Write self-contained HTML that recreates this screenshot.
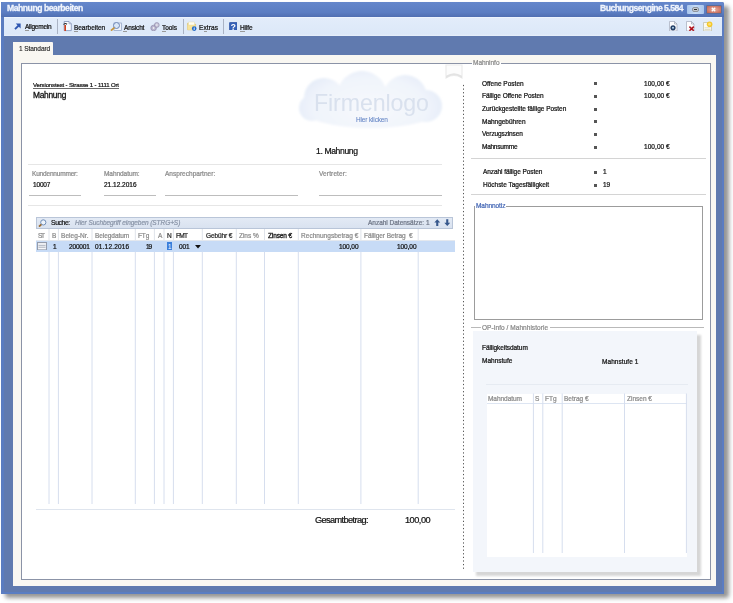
<!DOCTYPE html>
<html><head><meta charset="utf-8">
<style>
*{margin:0;padding:0;box-sizing:border-box}
html,body{width:733px;height:603px;overflow:hidden;background:#fff;font-family:"Liberation Sans",sans-serif;color:#222}
.a{position:absolute}
.t{position:absolute;white-space:nowrap;line-height:1;will-change:transform}
</style></head><body>
<div class="a" style="left:5px;top:6px;width:723.5px;height:591.5px;background:#777;filter:blur(2.3px);opacity:.78;border-radius:3px"></div>
<div class="a" style="left:1px;top:2px;width:723.4px;height:592px;background:#607aaf;border-radius:2px 2px 1px 1px"></div>
<div class="a" style="left:1px;top:2px;width:3px;height:592px;background:#5a7cc0"></div>
<div class="a" style="left:721.7px;top:17px;width:2.7px;height:577px;background:#5a7cc2"></div>
<div class="a" style="left:1px;top:592px;width:723.4px;height:2px;background:#5a7dc2"></div>
<div class="a" style="left:1px;top:2px;width:723.4px;height:15px;background:linear-gradient(#6587cb,#5b7dc2 70%,#506fb2);border-radius:2px 2px 0 0"></div>
<div class="t" style="left:7.2px;top:4px;font-size:8.6px;color:#f0f4fc;-webkit-text-stroke:0.3px #f0f4fc;font-weight:bold;letter-spacing:-0.453px;">Mahnung bearbeiten</div>
<div class="t" style="right:50.24px;top:4px;font-size:8.6px;color:#f0f4fc;-webkit-text-stroke:0.3px #f0f4fc;font-weight:bold;letter-spacing:-0.535px;">Buchungsengine 5.584</div>
<div class="a" style="left:687px;top:5px;width:17.3px;height:9px;background:linear-gradient(90deg,#a9c6ec,#c5dbf7 50%,#a9c6ec);border-radius:1px"></div>
<div class="a" style="left:692px;top:6.6px;width:7.2px;height:5.7px;background:#c3c8cf;border:1px solid #8f959d;border-radius:2px"></div>
<div class="a" style="left:694px;top:8.9px;width:3.2px;height:1.3px;background:#2e2e2e"></div>
<div class="a" style="left:705.5px;top:5px;width:16px;height:9px;background:radial-gradient(ellipse at center,#eab2a4 0,#d27f6e 60%,#b8604f 100%);border:1px solid #5b6d9a;border-radius:1px"></div>
<svg class="a" style="left:711px;top:7px" width="5" height="5"><path d="M.8 .8 L4.2 4.2 M4.2 .8 L.8 4.2" stroke="#fff" stroke-width="1.3"/></svg>
<div class="a" style="left:4px;top:17px;width:718px;height:18.5px;background:linear-gradient(#f3f8ff 0,#e2ecfa 8%,#dce8f8 90%,#e8f0fb 100%)"></div>
<div class="a" style="left:57.3px;top:19px;width:1px;height:15px;background:#aab3c4"></div>
<div class="a" style="left:182.5px;top:19px;width:1px;height:15px;background:#aab3c4"></div>
<div class="a" style="left:223px;top:19px;width:1px;height:15px;background:#aab3c4"></div>
<svg class="a" style="left:14px;top:23px" width="7" height="7" viewBox="0 0 7 7"><path d="M1 6.2 L5.2 2" stroke="#2f56b0" stroke-width="1.9"/><path d="M1.8 .6 H6.6 V5.4 Z" fill="#2f56b0"/></svg>
<div class="t" style="left:25.2px;top:24px;font-size:6.5px;color:#111;-webkit-text-stroke:0.22px #111;letter-spacing:-0.243px;">Allgemein</div>
<div class="a" style="left:25.2px;top:30px;width:4px;height:0.7px;background:#9a9a9a"></div>
<svg class="a" style="left:62px;top:21px" width="10" height="10.5" viewBox="0 0 10 10.5"><path d="M2.2 .5 H7 L9.3 2.8 V9.6 H2.2 Z" fill="#f8faff" stroke="#7d8fb5" stroke-width=".8"/><path d="M7 .5 V2.8 H9.3" fill="none" stroke="#7d8fb5" stroke-width=".6"/><path d="M3.2 4 V10" stroke="#d4401c" stroke-width="1.6"/><path d="M1.6 3.6 Q3 1.6 5 3.2" stroke="#2a2a2a" stroke-width="1.1" fill="none"/></svg>
<div class="t" style="left:74.2px;top:25px;font-size:6.5px;color:#111;-webkit-text-stroke:0.22px #111;letter-spacing:-0.038px;">Bearbeiten</div>
<div class="a" style="left:74.2px;top:30.5px;width:4px;height:0.7px;background:#9a9a9a"></div>
<svg class="a" style="left:110px;top:20.8px" width="12" height="10" viewBox="0 0 12 10"><rect x="4" y="2" width="7.5" height="7.5" fill="#eef2fa" stroke="#8d9ec0" stroke-width=".7"/><circle cx="6.5" cy="4.5" r="3" fill="#d8e6f7" stroke="#6d85b5" stroke-width="1"/><path d="M4.4 6.6 L1 9.6" stroke="#c8963a" stroke-width="1.8"/></svg>
<div class="t" style="left:123.8px;top:25px;font-size:6.5px;color:#111;-webkit-text-stroke:0.22px #111;letter-spacing:-0.153px;">Ansicht</div>
<div class="a" style="left:123px;top:30.5px;width:4px;height:0.7px;background:#9a9a9a"></div>
<svg class="a" style="left:150px;top:21.5px" width="10" height="9" viewBox="0 0 10 9"><circle cx="3.6" cy="6" r="2.8" fill="#b8b4cf" stroke="#8f8aa8" stroke-width=".7"/><circle cx="6.8" cy="3" r="2.4" fill="#c9c6dc" stroke="#8f8aa8" stroke-width=".7"/><circle cx="3.6" cy="6" r=".9" fill="#eee"/><circle cx="6.8" cy="3" r=".8" fill="#eee"/></svg>
<div class="t" style="left:162.3px;top:25px;font-size:6.5px;color:#111;-webkit-text-stroke:0.22px #111;letter-spacing:-0.044px;">Tools</div>
<div class="a" style="left:162.3px;top:30.5px;width:4px;height:0.7px;background:#9a9a9a"></div>
<svg class="a" style="left:187px;top:21px" width="10" height="10" viewBox="0 0 10 10"><path d="M.6 2.2 H3.8 L4.8 3.2 H8.6 V8.8 H.6 Z" fill="#f3dc86" stroke="#d9b85a" stroke-width=".6"/><path d="M1.5 1 H7.5 V4 H1.5Z" fill="#fffdf0" stroke="#e0d4a0" stroke-width=".4"/><path d="M.6 4.2 H8.6 V8.8 H.6 Z" fill="#f7e39a"/><circle cx="7.2" cy="7.6" r="2.3" fill="#1d68cc"/><path d="M7.2 7 V8.9" stroke="#fff" stroke-width=".9"/><circle cx="7.2" cy="6.2" r=".45" fill="#fff"/></svg>
<div class="t" style="left:199px;top:25px;font-size:6.5px;color:#111;-webkit-text-stroke:0.22px #111;letter-spacing:0.116px;">Extras</div>
<div class="a" style="left:203.5px;top:30.5px;width:3.5px;height:0.7px;background:#9a9a9a"></div>
<svg class="a" style="left:228.9px;top:21.9px" width="8.6" height="8.6" viewBox="0 0 8.6 8.6"><rect x=".3" y=".3" width="8" height="8" rx="1.2" fill="#3460b8" stroke="#2a4d9c" stroke-width=".6"/><text x="4.3" y="7.5" font-size="8.4" font-weight="bold" text-anchor="middle" fill="#fff" font-family="Liberation Sans">?</text></svg>
<div class="t" style="left:240.3px;top:25px;font-size:6.5px;color:#111;-webkit-text-stroke:0.22px #111;letter-spacing:-0.126px;">Hilfe</div>
<div class="a" style="left:240.3px;top:30.5px;width:4.5px;height:0.7px;background:#9a9a9a"></div>
<svg class="a" style="left:668.8px;top:20.6px" width="9" height="10.5" viewBox="0 0 9 10.5"><path d="M.5 .5 H5.5 L8 3 V10 H.5 Z" fill="#fcfcfe" stroke="#a3abbb" stroke-width=".7"/><path d="M5.5 .5 V3 H8" fill="none" stroke="#8a93a5" stroke-width=".6"/><circle cx="4" cy="6.8" r="2.6" fill="#243f66"/><circle cx="4" cy="6.8" r="1" fill="#b8d8f0"/></svg>
<svg class="a" style="left:686px;top:20.6px" width="9" height="10.5" viewBox="0 0 9 10.5"><path d="M.5 .5 H5.5 L8 3 V10 H.5 Z" fill="#fcfcfe" stroke="#a3abbb" stroke-width=".7"/><path d="M5.5 .5 V3 H8" fill="none" stroke="#8a93a5" stroke-width=".6"/><path d="M3.4 5.6 L7.8 9.8 M7.8 5.6 L3.4 9.8" stroke="#b0141e" stroke-width="1.5"/></svg>
<svg class="a" style="left:702.6px;top:20.5px" width="10" height="10.5" viewBox="0 0 10 10.5"><path d="M.5 1.5 H6 L8.5 4 V10 H.5 Z" fill="#fbfaf2" stroke="#bdbba5" stroke-width=".7"/><circle cx="6.6" cy="3.2" r="2.8" fill="#f5c82a"/><circle cx="6.6" cy="3.2" r="1.4" fill="#fbe07a"/><path d="M1.6 6.8 H7.5 M1.6 8.6 H7.5" stroke="#c8c4a8" stroke-width=".6"/></svg>
<div class="a" style="left:13px;top:42px;width:40.3px;height:13px;background:#f9f7f2;border-radius:0 1px 0 0"></div>
<div class="t" style="left:18.5px;top:46px;font-size:6.6px;color:#222;-webkit-text-stroke:0.12px #222;letter-spacing:-0.121px;">1 Standard</div>
<div class="a" style="left:13px;top:54.5px;width:703px;height:531px;background:#f9f7f2"></div>
<div class="a" style="left:21px;top:63px;width:690px;height:517px;background:#fff;border:1px solid #8b93a7"></div>
<div class="t" style="left:33.3px;top:82px;font-size:6.0px;color:#111;-webkit-text-stroke:0.22px #111;letter-spacing:-0.138px;">Versionstest - Strasse 1 - 1111 Ort</div>
<div class="a" style="left:33.3px;top:88px;width:86px;height:0.8px;background:#6a6a6a"></div>
<div class="t" style="left:33.3px;top:91px;font-size:8.4px;color:#111;-webkit-text-stroke:0.3px #111;letter-spacing:-0.271px;">Mahnung</div>
<svg class="a" style="left:290px;top:60px" width="160" height="80" viewBox="0 0 160 80"><defs><radialGradient id="cg" gradientUnits="userSpaceOnUse" cx="80" cy="48" r="75" gradientTransform="translate(80 48) scale(1 .55) translate(-80 -48)"><stop offset="0" stop-color="#f7f9fd"/><stop offset="0.75" stop-color="#f0f4fb"/><stop offset="1" stop-color="#e6edf8"/></radialGradient><filter id="cb" x="-10%" y="-10%" width="120%" height="120%"><feGaussianBlur stdDeviation="0.9"/></filter></defs><g filter="url(#cb)" fill="url(#cg)"><ellipse cx="81" cy="48" rx="70" ry="20"/><circle cx="34" cy="38" r="20"/><circle cx="72" cy="36" r="25"/><circle cx="115" cy="37" r="22"/><circle cx="136" cy="46" r="16"/><circle cx="22" cy="48" r="13"/></g></svg>
<div class="t" style="left:313.6px;top:92px;font-size:23.2px;color:#d9e1ee;letter-spacing:-0.116px;">Firmenlogo</div>
<div class="t" style="left:355.7px;top:117px;font-size:6.5px;color:#5f80c2;-webkit-text-stroke:0.05px #5f80c2;letter-spacing:-0.154px;">Hier klicken</div>
<div class="t" style="left:316px;top:147px;font-size:8.6px;color:#111;-webkit-text-stroke:0.22px #111;letter-spacing:-0.380px;">1. Mahnung</div>
<svg class="a" style="left:445px;top:64px" width="18" height="15" viewBox="0 0 18 15"><path d="M1 1 H17 V14 Q9 9 1 14 Z" fill="#fcfcfc" stroke="#ececec" stroke-width="1.2"/><path d="M1 14.2 Q9 8.5 17 14.2 V11.8 Q9 6.5 1 11.8 Z" fill="#e3e3e3"/></svg>
<div class="a" style="left:27.5px;top:164px;width:414.5px;height:1px;background:#e6e6e6"></div>
<div class="a" style="left:27.5px;top:205px;width:414.5px;height:1px;background:#e6e6e6"></div>
<div class="t" style="left:31.9px;top:171px;font-size:6.5px;color:#8a8a8a;-webkit-text-stroke:0.22px #8a8a8a;letter-spacing:-0.180px;">Kundennummer:</div>
<div class="t" style="left:32.5px;top:182px;font-size:6.5px;color:#111;-webkit-text-stroke:0.22px #111;letter-spacing:-0.169px;">10007</div>
<div class="a" style="left:29.4px;top:195px;width:51.4px;height:1px;background:#bdbdbd"></div>
<div class="t" style="left:104.2px;top:171px;font-size:6.5px;color:#8a8a8a;-webkit-text-stroke:0.22px #8a8a8a;letter-spacing:-0.059px;">Mahndatum:</div>
<div class="t" style="left:104.2px;top:182px;font-size:6.5px;color:#111;-webkit-text-stroke:0.22px #111;letter-spacing:0.008px;">21.12.2016</div>
<div class="a" style="left:104px;top:195px;width:51.8px;height:1px;background:#bdbdbd"></div>
<div class="t" style="left:164.9px;top:171px;font-size:6.5px;color:#8a8a8a;-webkit-text-stroke:0.22px #8a8a8a;letter-spacing:0.023px;">Ansprechpartner:</div>
<div class="a" style="left:164.8px;top:195px;width:133.6px;height:1px;background:#bdbdbd"></div>
<div class="t" style="left:318.8px;top:171px;font-size:6.5px;color:#8a8a8a;-webkit-text-stroke:0.22px #8a8a8a;letter-spacing:0.130px;">Vertreter:</div>
<div class="a" style="left:318.8px;top:195px;width:123px;height:1px;background:#bdbdbd"></div>
<svg class="a" style="left:0;top:0" width="733" height="603"><rect x="463" y="84.90" width="1" height="1.25" fill="#555"/><rect x="463" y="88.50" width="1" height="1.25" fill="#555"/><rect x="463" y="92.10" width="1" height="1.25" fill="#555"/><rect x="463" y="95.71" width="1" height="1.25" fill="#555"/><rect x="463" y="99.31" width="1" height="1.25" fill="#555"/><rect x="463" y="102.91" width="1" height="1.25" fill="#555"/><rect x="463" y="106.51" width="1" height="1.25" fill="#555"/><rect x="463" y="110.11" width="1" height="1.25" fill="#555"/><rect x="463" y="113.72" width="1" height="1.25" fill="#555"/><rect x="463" y="117.32" width="1" height="1.25" fill="#555"/><rect x="463" y="120.92" width="1" height="1.25" fill="#555"/><rect x="463" y="124.52" width="1" height="1.25" fill="#555"/><rect x="463" y="128.12" width="1" height="1.25" fill="#555"/><rect x="463" y="131.73" width="1" height="1.25" fill="#555"/><rect x="463" y="135.33" width="1" height="1.25" fill="#555"/><rect x="463" y="138.93" width="1" height="1.25" fill="#555"/><rect x="463" y="142.53" width="1" height="1.25" fill="#555"/><rect x="463" y="146.13" width="1" height="1.25" fill="#555"/><rect x="463" y="149.74" width="1" height="1.25" fill="#555"/><rect x="463" y="153.34" width="1" height="1.25" fill="#555"/><rect x="463" y="156.94" width="1" height="1.25" fill="#555"/><rect x="463" y="160.54" width="1" height="1.25" fill="#555"/><rect x="463" y="164.14" width="1" height="1.25" fill="#555"/><rect x="463" y="167.75" width="1" height="1.25" fill="#555"/><rect x="463" y="171.35" width="1" height="1.25" fill="#555"/><rect x="463" y="174.95" width="1" height="1.25" fill="#555"/><rect x="463" y="178.55" width="1" height="1.25" fill="#555"/><rect x="463" y="182.15" width="1" height="1.25" fill="#555"/><rect x="463" y="185.76" width="1" height="1.25" fill="#555"/><rect x="463" y="189.36" width="1" height="1.25" fill="#555"/><rect x="463" y="192.96" width="1" height="1.25" fill="#555"/><rect x="463" y="196.56" width="1" height="1.25" fill="#555"/><rect x="463" y="200.16" width="1" height="1.25" fill="#555"/><rect x="463" y="203.77" width="1" height="1.25" fill="#555"/><rect x="463" y="207.37" width="1" height="1.25" fill="#555"/><rect x="463" y="210.97" width="1" height="1.25" fill="#555"/><rect x="463" y="214.57" width="1" height="1.25" fill="#555"/><rect x="463" y="218.17" width="1" height="1.25" fill="#555"/><rect x="463" y="221.78" width="1" height="1.25" fill="#555"/><rect x="463" y="225.38" width="1" height="1.25" fill="#555"/><rect x="463" y="228.98" width="1" height="1.25" fill="#555"/><rect x="463" y="232.58" width="1" height="1.25" fill="#555"/><rect x="463" y="236.18" width="1" height="1.25" fill="#555"/><rect x="463" y="239.79" width="1" height="1.25" fill="#555"/><rect x="463" y="243.39" width="1" height="1.25" fill="#555"/><rect x="463" y="246.99" width="1" height="1.25" fill="#555"/><rect x="463" y="250.59" width="1" height="1.25" fill="#555"/><rect x="463" y="254.19" width="1" height="1.25" fill="#555"/><rect x="463" y="257.80" width="1" height="1.25" fill="#555"/><rect x="463" y="261.40" width="1" height="1.25" fill="#555"/><rect x="463" y="265.00" width="1" height="1.25" fill="#555"/><rect x="463" y="268.60" width="1" height="1.25" fill="#555"/><rect x="463" y="272.20" width="1" height="1.25" fill="#555"/><rect x="463" y="275.81" width="1" height="1.25" fill="#555"/><rect x="463" y="279.41" width="1" height="1.25" fill="#555"/><rect x="463" y="283.01" width="1" height="1.25" fill="#555"/><rect x="463" y="286.61" width="1" height="1.25" fill="#555"/><rect x="463" y="290.21" width="1" height="1.25" fill="#555"/><rect x="463" y="293.82" width="1" height="1.25" fill="#555"/><rect x="463" y="297.42" width="1" height="1.25" fill="#555"/><rect x="463" y="301.02" width="1" height="1.25" fill="#555"/><rect x="463" y="304.62" width="1" height="1.25" fill="#555"/><rect x="463" y="308.22" width="1" height="1.25" fill="#555"/><rect x="463" y="311.83" width="1" height="1.25" fill="#555"/><rect x="463" y="315.43" width="1" height="1.25" fill="#555"/><rect x="463" y="319.03" width="1" height="1.25" fill="#555"/><rect x="463" y="322.63" width="1" height="1.25" fill="#555"/><rect x="463" y="326.23" width="1" height="1.25" fill="#555"/><rect x="463" y="329.84" width="1" height="1.25" fill="#555"/><rect x="463" y="333.44" width="1" height="1.25" fill="#555"/><rect x="463" y="337.04" width="1" height="1.25" fill="#555"/><rect x="463" y="340.64" width="1" height="1.25" fill="#555"/><rect x="463" y="344.24" width="1" height="1.25" fill="#555"/><rect x="463" y="347.85" width="1" height="1.25" fill="#555"/><rect x="463" y="351.45" width="1" height="1.25" fill="#555"/><rect x="463" y="355.05" width="1" height="1.25" fill="#555"/><rect x="463" y="358.65" width="1" height="1.25" fill="#555"/><rect x="463" y="362.25" width="1" height="1.25" fill="#555"/><rect x="463" y="365.86" width="1" height="1.25" fill="#555"/><rect x="463" y="369.46" width="1" height="1.25" fill="#555"/><rect x="463" y="373.06" width="1" height="1.25" fill="#555"/><rect x="463" y="376.66" width="1" height="1.25" fill="#555"/><rect x="463" y="380.26" width="1" height="1.25" fill="#555"/><rect x="463" y="383.87" width="1" height="1.25" fill="#555"/><rect x="463" y="387.47" width="1" height="1.25" fill="#555"/><rect x="463" y="391.07" width="1" height="1.25" fill="#555"/><rect x="463" y="394.67" width="1" height="1.25" fill="#555"/><rect x="463" y="398.27" width="1" height="1.25" fill="#555"/><rect x="463" y="401.88" width="1" height="1.25" fill="#555"/><rect x="463" y="405.48" width="1" height="1.25" fill="#555"/><rect x="463" y="409.08" width="1" height="1.25" fill="#555"/><rect x="463" y="412.68" width="1" height="1.25" fill="#555"/><rect x="463" y="416.28" width="1" height="1.25" fill="#555"/><rect x="463" y="419.89" width="1" height="1.25" fill="#555"/><rect x="463" y="423.49" width="1" height="1.25" fill="#555"/><rect x="463" y="427.09" width="1" height="1.25" fill="#555"/><rect x="463" y="430.69" width="1" height="1.25" fill="#555"/><rect x="463" y="434.29" width="1" height="1.25" fill="#555"/><rect x="463" y="437.90" width="1" height="1.25" fill="#555"/><rect x="463" y="441.50" width="1" height="1.25" fill="#555"/><rect x="463" y="445.10" width="1" height="1.25" fill="#555"/><rect x="463" y="448.70" width="1" height="1.25" fill="#555"/><rect x="463" y="452.30" width="1" height="1.25" fill="#555"/><rect x="463" y="455.91" width="1" height="1.25" fill="#555"/><rect x="463" y="459.51" width="1" height="1.25" fill="#555"/><rect x="463" y="463.11" width="1" height="1.25" fill="#555"/><rect x="463" y="466.71" width="1" height="1.25" fill="#555"/><rect x="463" y="470.31" width="1" height="1.25" fill="#555"/><rect x="463" y="473.92" width="1" height="1.25" fill="#555"/><rect x="463" y="477.52" width="1" height="1.25" fill="#555"/><rect x="463" y="481.12" width="1" height="1.25" fill="#555"/><rect x="463" y="484.72" width="1" height="1.25" fill="#555"/><rect x="463" y="488.32" width="1" height="1.25" fill="#555"/><rect x="463" y="491.93" width="1" height="1.25" fill="#555"/><rect x="463" y="495.53" width="1" height="1.25" fill="#555"/><rect x="463" y="499.13" width="1" height="1.25" fill="#555"/><rect x="463" y="502.73" width="1" height="1.25" fill="#555"/><rect x="463" y="506.33" width="1" height="1.25" fill="#555"/><rect x="463" y="509.94" width="1" height="1.25" fill="#555"/><rect x="463" y="513.54" width="1" height="1.25" fill="#555"/><rect x="463" y="517.14" width="1" height="1.25" fill="#555"/><rect x="463" y="520.74" width="1" height="1.25" fill="#555"/><rect x="463" y="524.34" width="1" height="1.25" fill="#555"/><rect x="463" y="527.95" width="1" height="1.25" fill="#555"/><rect x="463" y="531.55" width="1" height="1.25" fill="#555"/><rect x="463" y="535.15" width="1" height="1.25" fill="#555"/><rect x="463" y="538.75" width="1" height="1.25" fill="#555"/><rect x="463" y="542.35" width="1" height="1.25" fill="#555"/><rect x="463" y="545.96" width="1" height="1.25" fill="#555"/><rect x="463" y="549.56" width="1" height="1.25" fill="#555"/><rect x="463" y="553.16" width="1" height="1.25" fill="#555"/><rect x="463" y="556.76" width="1" height="1.25" fill="#555"/><rect x="463" y="560.36" width="1" height="1.25" fill="#555"/><rect x="463" y="563.97" width="1" height="1.25" fill="#555"/><rect x="463" y="567.57" width="1" height="1.25" fill="#555"/></svg>
<div class="a" style="left:36px;top:217px;width:416.5px;height:11.8px;background:linear-gradient(#e3eaf5,#d9e2f0);border:1px solid #b9c5d8"></div>
<svg class="a" style="left:37.8px;top:218.8px" width="9" height="8" viewBox="0 0 9 8"><circle cx="5.3" cy="3.4" r="2.6" fill="#eef4fb" stroke="#6f8db8" stroke-width="1"/><path d="M3.4 5.3 L1 7.6" stroke="#9a6a30" stroke-width="1.8"/></svg>
<div class="t" style="left:50.8px;top:220px;font-size:6.8px;color:#111;-webkit-text-stroke:0.2px #111;letter-spacing:-0.394px;">Suche:</div>
<div class="t" style="left:75px;top:220px;font-size:6.5px;color:#8a95a8;-webkit-text-stroke:0.22px #8a95a8;font-style:italic;letter-spacing:-0.066px;">Hier Suchbegriff eingeben (STRG+S)</div>
<div class="t" style="right:303.42px;top:220px;font-size:6.5px;color:#6d7585;-webkit-text-stroke:0.22px #6d7585;letter-spacing:-0.015px;">Anzahl Datensätze: 1</div>
<svg class="a" style="left:434.3px;top:218.6px" width="6.5" height="7.5" viewBox="0 0 6.5 7.5"><path d="M3.25 .3 L6.2 3.6 H4.3 V7 H2.2 V3.6 H.3 Z" fill="#37588c"/></svg>
<svg class="a" style="left:443.5px;top:218.6px" width="6.5" height="7.5" viewBox="0 0 6.5 7.5"><path d="M3.25 7 L6.2 3.7 H4.3 V.3 H2.2 V3.7 H.3 Z" fill="#37588c"/></svg>
<div class="a" style="left:36px;top:240.3px;width:418.7px;height:11.4px;background:#c7dbf6"></div>
<svg class="a" style="left:0;top:0" width="733" height="603"><line x1="49.0" y1="229" x2="49.0" y2="240.3" stroke="#dfe3ea" stroke-width="1"/><line x1="49.0" y1="251.7" x2="49.0" y2="504" stroke="#d6deee" stroke-width="1"/><line x1="58.4" y1="229" x2="58.4" y2="240.3" stroke="#dfe3ea" stroke-width="1"/><line x1="58.4" y1="251.7" x2="58.4" y2="504" stroke="#d6deee" stroke-width="1"/><line x1="92.0" y1="229" x2="92.0" y2="240.3" stroke="#dfe3ea" stroke-width="1"/><line x1="92.0" y1="251.7" x2="92.0" y2="504" stroke="#d6deee" stroke-width="1"/><line x1="135.3" y1="229" x2="135.3" y2="240.3" stroke="#dfe3ea" stroke-width="1"/><line x1="135.3" y1="251.7" x2="135.3" y2="504" stroke="#d6deee" stroke-width="1"/><line x1="154.4" y1="229" x2="154.4" y2="240.3" stroke="#dfe3ea" stroke-width="1"/><line x1="154.4" y1="251.7" x2="154.4" y2="504" stroke="#d6deee" stroke-width="1"/><line x1="164.0" y1="229" x2="164.0" y2="240.3" stroke="#dfe3ea" stroke-width="1"/><line x1="164.0" y1="251.7" x2="164.0" y2="504" stroke="#d6deee" stroke-width="1"/><line x1="173.4" y1="229" x2="173.4" y2="240.3" stroke="#dfe3ea" stroke-width="1"/><line x1="173.4" y1="251.7" x2="173.4" y2="504" stroke="#d6deee" stroke-width="1"/><line x1="202.3" y1="229" x2="202.3" y2="240.3" stroke="#dfe3ea" stroke-width="1"/><line x1="202.3" y1="251.7" x2="202.3" y2="504" stroke="#d6deee" stroke-width="1"/><line x1="236.3" y1="229" x2="236.3" y2="240.3" stroke="#dfe3ea" stroke-width="1"/><line x1="236.3" y1="251.7" x2="236.3" y2="504" stroke="#d6deee" stroke-width="1"/><line x1="264.5" y1="229" x2="264.5" y2="240.3" stroke="#dfe3ea" stroke-width="1"/><line x1="264.5" y1="251.7" x2="264.5" y2="504" stroke="#d6deee" stroke-width="1"/><line x1="298.3" y1="229" x2="298.3" y2="240.3" stroke="#dfe3ea" stroke-width="1"/><line x1="298.3" y1="251.7" x2="298.3" y2="504" stroke="#d6deee" stroke-width="1"/><line x1="360.9" y1="229" x2="360.9" y2="240.3" stroke="#dfe3ea" stroke-width="1"/><line x1="360.9" y1="251.7" x2="360.9" y2="504" stroke="#d6deee" stroke-width="1"/><line x1="418.2" y1="229" x2="418.2" y2="240.3" stroke="#dfe3ea" stroke-width="1"/><line x1="418.2" y1="251.7" x2="418.2" y2="504" stroke="#d6deee" stroke-width="1"/></svg>
<div class="a" style="left:36px;top:240px;width:418.7px;height:0.6px;background:#e4e8ee"></div>
<div class="t" style="left:37.7px;top:233px;font-size:6.5px;color:#8a8a8a;-webkit-text-stroke:0.22px #8a8a8a;letter-spacing:-1.306px;">ST</div>
<div class="t" style="left:52px;top:233px;font-size:6.5px;color:#8a8a8a;-webkit-text-stroke:0.22px #8a8a8a;">B</div>
<div class="t" style="left:61px;top:233px;font-size:6.5px;color:#8a8a8a;-webkit-text-stroke:0.22px #8a8a8a;letter-spacing:0.051px;">Beleg-Nr.</div>
<div class="t" style="left:94.9px;top:233px;font-size:6.5px;color:#8a8a8a;-webkit-text-stroke:0.22px #8a8a8a;letter-spacing:-0.054px;">Belegdatum</div>
<div class="t" style="left:137.9px;top:233px;font-size:6.5px;color:#8a8a8a;-webkit-text-stroke:0.22px #8a8a8a;letter-spacing:-0.128px;">FTg</div>
<div class="t" style="left:157.6px;top:233px;font-size:6.5px;color:#8a8a8a;-webkit-text-stroke:0.22px #8a8a8a;">A</div>
<div class="t" style="left:166.8px;top:233px;font-size:6.5px;color:#262626;-webkit-text-stroke:0.22px #262626;">N</div>
<div class="t" style="left:176.4px;top:233px;font-size:6.5px;color:#262626;-webkit-text-stroke:0.22px #262626;letter-spacing:-0.678px;">FMT</div>
<div class="t" style="left:205.6px;top:233px;font-size:6.5px;color:#262626;-webkit-text-stroke:0.22px #262626;letter-spacing:-0.100px;">Gebühr €</div>
<div class="t" style="left:239px;top:233px;font-size:6.5px;color:#8a8a8a;-webkit-text-stroke:0.22px #8a8a8a;letter-spacing:-0.033px;">Zins %</div>
<div class="t" style="left:267.9px;top:233px;font-size:6.5px;color:#262626;-webkit-text-stroke:0.35px #262626;letter-spacing:-0.133px;">Zinsen €</div>
<div class="t" style="left:301.1px;top:233px;font-size:6.5px;color:#8a8a8a;-webkit-text-stroke:0.22px #8a8a8a;letter-spacing:0.035px;">Rechnungsbetrag €</div>
<div class="t" style="left:363.7px;top:233px;font-size:6.5px;color:#8a8a8a;-webkit-text-stroke:0.22px #8a8a8a;letter-spacing:-0.047px;">Fälliger Betrag&nbsp; €</div>
<svg class="a" style="left:37px;top:241.8px" width="10" height="8.4" viewBox="0 0 10 8.4"><rect x=".5" y=".5" width="9" height="7.4" fill="#e9ecf2" stroke="#959cab" stroke-width="1"/><path d="M1.5 2.3 H8.5 M1.5 4.2 H8.5 M1.5 6.1 H8.5" stroke="#fff" stroke-width="1"/><path d="M1.5 3.3 H8.5 M1.5 5.2 H8.5" stroke="#9aa1ae" stroke-width=".8"/></svg>
<div class="t" style="left:53.3px;top:244px;font-size:6.5px;color:#111;-webkit-text-stroke:0.22px #111;">1</div>
<div class="t" style="right:643.46px;top:244px;font-size:6.5px;color:#111;-webkit-text-stroke:0.22px #111;letter-spacing:-0.158px;">200001</div>
<div class="t" style="left:94.9px;top:244px;font-size:6.5px;color:#111;-webkit-text-stroke:0.22px #111;letter-spacing:0.185px;">01.12.2016</div>
<div class="t" style="right:582.13px;top:244px;font-size:6.5px;color:#111;-webkit-text-stroke:0.22px #111;letter-spacing:-1.130px;">19</div>
<div class="a" style="left:167.4px;top:242px;width:4.6px;height:8px;background:#3a7fdc"></div>
<div class="t" style="left:167.6px;top:244px;font-size:6.5px;color:#fff;">1</div>
<div class="t" style="left:179.2px;top:244px;font-size:6.5px;color:#111;-webkit-text-stroke:0.22px #111;letter-spacing:-0.173px;">001</div>
<svg class="a" style="left:195px;top:245px" width="6" height="4" viewBox="0 0 6 4"><path d="M0 0 H6 L3 3.5 Z" fill="#111"/></svg>
<div class="t" style="right:374.68px;top:244px;font-size:6.5px;color:#111;-webkit-text-stroke:0.22px #111;letter-spacing:-0.076px;">100,00</div>
<div class="t" style="right:316.68px;top:244px;font-size:6.5px;color:#111;-webkit-text-stroke:0.22px #111;letter-spacing:-0.076px;">100,00</div>
<div class="a" style="left:36px;top:509px;width:418.5px;height:1px;background:#dfe5ee"></div>
<div class="t" style="left:315px;top:516px;font-size:9.2px;color:#111;-webkit-text-stroke:0.22px #111;letter-spacing:-0.604px;">Gesamtbetrag:</div>
<div class="t" style="right:302.89px;top:516px;font-size:9.2px;color:#111;-webkit-text-stroke:0.22px #111;letter-spacing:-0.488px;">100,00</div>
<div class="a" style="left:472.2px;top:62px;width:29px;height:3px;background:#fff"></div>
<div class="t" style="left:473.3px;top:60px;font-size:6.5px;color:#8a8a8a;-webkit-text-stroke:0.22px #8a8a8a;letter-spacing:-0.034px;">Mahninfo</div>
<div class="t" style="left:482.4px;top:81px;font-size:6.5px;color:#111;-webkit-text-stroke:0.22px #111;letter-spacing:0.022px;">Offene Posten</div>
<div class="a" style="left:594px;top:82px;width:3px;height:3px;background:#555"></div>
<div class="t" style="right:63.54px;top:81px;font-size:6.5px;color:#111;-webkit-text-stroke:0.22px #111;letter-spacing:0.057px;">100,00 €</div>
<div class="t" style="left:482.4px;top:93px;font-size:6.5px;color:#111;-webkit-text-stroke:0.22px #111;letter-spacing:-0.035px;">Fällige Offene Posten</div>
<div class="a" style="left:594px;top:95px;width:3px;height:3px;background:#555"></div>
<div class="t" style="right:63.54px;top:93px;font-size:6.5px;color:#111;-webkit-text-stroke:0.22px #111;letter-spacing:0.057px;">100,00 €</div>
<div class="t" style="left:482.4px;top:106px;font-size:6.5px;color:#111;-webkit-text-stroke:0.22px #111;letter-spacing:-0.021px;">Zurückgestellte fällige Posten</div>
<div class="a" style="left:594px;top:108px;width:3px;height:3px;background:#555"></div>
<div class="t" style="left:482.4px;top:119px;font-size:6.5px;color:#111;-webkit-text-stroke:0.22px #111;letter-spacing:-0.021px;">Mahngebühren</div>
<div class="a" style="left:594px;top:120px;width:3px;height:3px;background:#555"></div>
<div class="t" style="left:482.4px;top:131px;font-size:6.5px;color:#111;-webkit-text-stroke:0.22px #111;letter-spacing:-0.123px;">Verzugszinsen</div>
<div class="a" style="left:594px;top:133px;width:3px;height:3px;background:#555"></div>
<div class="t" style="left:482.4px;top:144px;font-size:6.5px;color:#111;-webkit-text-stroke:0.22px #111;letter-spacing:-0.259px;">Mahnsumme</div>
<div class="a" style="left:594px;top:146px;width:3px;height:3px;background:#555"></div>
<div class="t" style="right:63.54px;top:144px;font-size:6.5px;color:#111;-webkit-text-stroke:0.22px #111;letter-spacing:0.057px;">100,00 €</div>
<div class="a" style="left:471px;top:157.5px;width:235px;height:1px;background:#d4d4d4"></div>
<div class="t" style="left:482.7px;top:169px;font-size:6.5px;color:#111;-webkit-text-stroke:0.22px #111;letter-spacing:-0.070px;">Anzahl fällige Posten</div>
<div class="a" style="left:594px;top:171px;width:3px;height:3px;background:#555"></div>
<div class="t" style="left:603px;top:169px;font-size:6.5px;color:#111;-webkit-text-stroke:0.22px #111;">1</div>
<div class="t" style="left:482.7px;top:182px;font-size:6.5px;color:#111;-webkit-text-stroke:0.22px #111;letter-spacing:-0.012px;">Höchste Tagesfälligkeit</div>
<div class="a" style="left:594px;top:184px;width:3px;height:3px;background:#555"></div>
<div class="t" style="left:603px;top:182px;font-size:6.5px;color:#111;-webkit-text-stroke:0.22px #111;letter-spacing:-0.030px;">19</div>
<div class="a" style="left:471px;top:194.2px;width:235px;height:1px;background:#d4d4d4"></div>
<div class="a" style="left:474px;top:206px;width:229px;height:114px;background:#fff;border:1px solid #9c9c9c"></div>
<div class="a" style="left:475px;top:205px;width:31px;height:3px;background:#fff"></div>
<div class="t" style="left:476.3px;top:203px;font-size:6.5px;color:#4467b5;-webkit-text-stroke:0.22px #4467b5;letter-spacing:-0.061px;">Mahnnotiz</div>
<div class="a" style="left:471px;top:327px;width:233px;height:1px;background:#b9b9b9"></div>
<div class="a" style="left:480.8px;top:325px;width:69px;height:4px;background:#fff"></div>
<div class="t" style="left:482.3px;top:325px;font-size:6.5px;color:#8a8a8a;-webkit-text-stroke:0.22px #8a8a8a;letter-spacing:0.046px;">OP-Info / Mahnhistorie</div>
<div class="a" style="left:476px;top:334.5px;width:225px;height:241px;background:#d6d6d6;filter:blur(1.2px)"></div>
<div class="a" style="left:473px;top:331px;width:224px;height:241px;background:#f3f6fb"></div>
<div class="t" style="left:482.2px;top:345px;font-size:6.5px;color:#111;-webkit-text-stroke:0.22px #111;letter-spacing:-0.078px;">Fälligkeitsdatum</div>
<div class="t" style="left:482.2px;top:358px;font-size:6.5px;color:#111;-webkit-text-stroke:0.22px #111;">Mahnstufe</div>
<div class="t" style="left:602px;top:359px;font-size:6.5px;color:#111;-webkit-text-stroke:0.22px #111;letter-spacing:0.063px;">Mahnstufe 1</div>
<div class="a" style="left:486px;top:384px;width:201.5px;height:1px;background:#e6ebf2"></div>
<div class="a" style="left:486.7px;top:393.5px;width:200px;height:163px;background:#fff"></div>
<div class="a" style="left:486.7px;top:403.3px;width:200px;height:0.8px;background:#dde5f2"></div>
<svg class="a" style="left:0;top:0" width="733" height="603"><line x1="533.4" y1="393.5" x2="533.4" y2="553" stroke="#d6deee" stroke-width="1"/><line x1="542.8" y1="393.5" x2="542.8" y2="553" stroke="#d6deee" stroke-width="1"/><line x1="562.2" y1="393.5" x2="562.2" y2="553" stroke="#d6deee" stroke-width="1"/><line x1="624.5" y1="393.5" x2="624.5" y2="553" stroke="#d6deee" stroke-width="1"/><line x1="686.4" y1="393.5" x2="686.4" y2="553" stroke="#d6deee" stroke-width="1"/></svg>
<div class="t" style="left:488px;top:396px;font-size:6.5px;color:#8a8a8a;-webkit-text-stroke:0.22px #8a8a8a;letter-spacing:-0.041px;">Mahndatum</div>
<div class="t" style="left:535.3px;top:396px;font-size:6.5px;color:#8a8a8a;-webkit-text-stroke:0.22px #8a8a8a;">S</div>
<div class="t" style="left:545px;top:396px;font-size:6.5px;color:#8a8a8a;-webkit-text-stroke:0.22px #8a8a8a;">FTg</div>
<div class="t" style="left:564.3px;top:396px;font-size:6.5px;color:#8a8a8a;-webkit-text-stroke:0.22px #8a8a8a;">Betrag €</div>
<div class="t" style="left:627px;top:396px;font-size:6.5px;color:#8a8a8a;-webkit-text-stroke:0.22px #8a8a8a;">Zinsen €</div>
</body></html>
